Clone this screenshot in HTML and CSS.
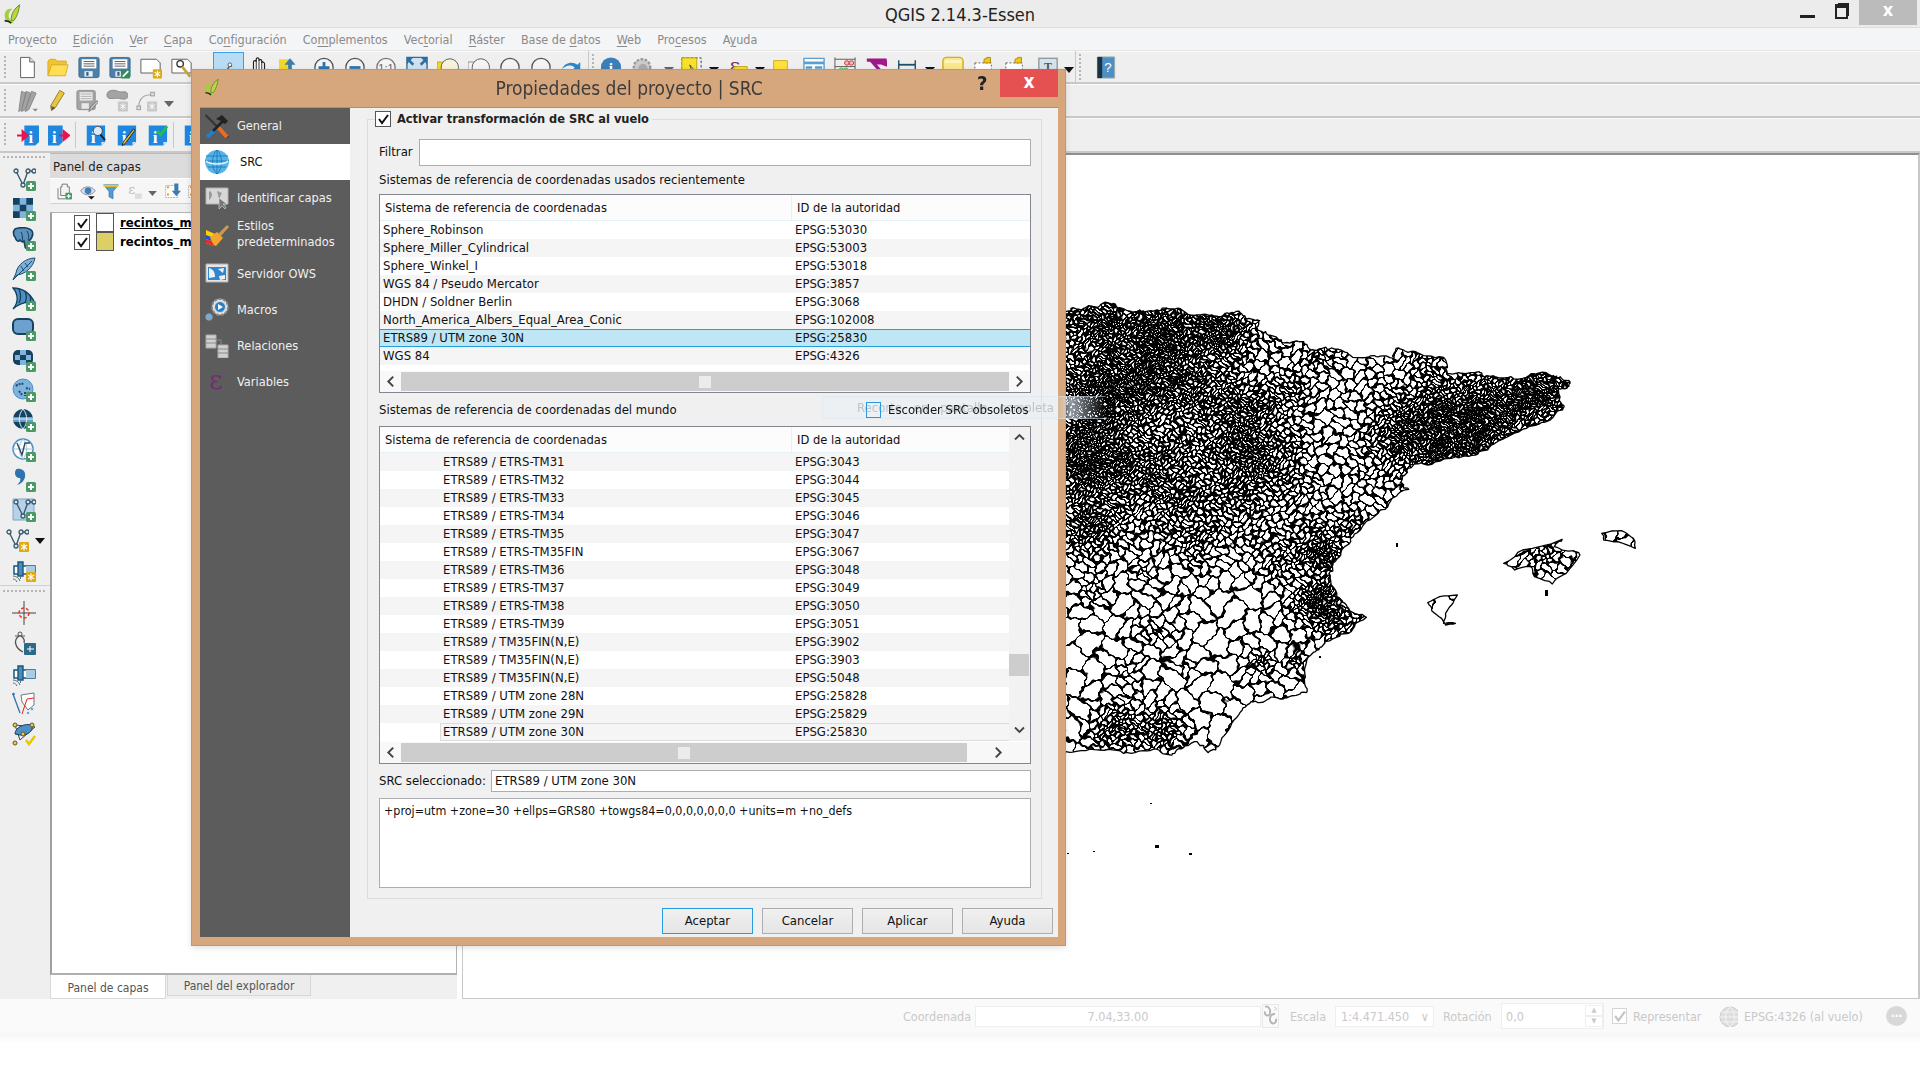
FILE: index.html
```html
<!DOCTYPE html>
<html lang="es">
<head>
<meta charset="utf-8">
<title>QGIS 2.14.3-Essen</title>
<link rel="stylesheet" href="styles.css">
</head>
<body>
<svg class="defs" xmlns="http://www.w3.org/2000/svg">
  <defs>
    <g id="b-plus"><rect x="14" y="14" width="10" height="10" rx="1.5" fill="#4a9a63"/><path d="M19 16v6M16 19h6" stroke="#fff" stroke-width="2"/></g>
    <g id="b-snow"><rect x="14" y="14" width="10" height="10" rx="1" fill="#e0a90f"/><path d="M19 15.5v7M16 17l6 4M22 17l-6 4" stroke="#fff" stroke-width="1.2"/></g>
    <g id="i-vee"><path d="M4 4l7 14 5-14h6" fill="none" stroke="#3a5a70" stroke-width="1.4"/><g fill="#dfe8ee" stroke="#3a5a70" stroke-width="1.3"><circle cx="4" cy="4" r="2"/><circle cx="11" cy="18" r="2"/><circle cx="16" cy="4" r="2"/><circle cx="22" cy="4" r="2"/></g></g>
    <g id="i-conn"><path d="M2 8h21v8H2z" fill="#fff" stroke="#14587f" stroke-width="1.5"/><path d="M14 8h9v8h-9z" fill="#a9cbe4"/><path d="M6 4h5v14H6z" fill="#4e8cbb" stroke="#14587f" stroke-width="1.4"/><path d="M8.500 18v3M1 18c3 0 6 2 7 5M1 21c2 0 3 1 4 3" fill="none" stroke="#5a7080"/></g>
    <g id="i-globe"><circle cx="12" cy="12" r="10" fill="#6fa8d6" stroke="#2f6f9f"/><path d="M2 12h20M12 2c-6 6-6 14 0 20M12 2c6 6 6 14 0 20M4 7h16M4 17h16" stroke="#d9ecfa" fill="none"/></g>

    <symbol id="ch-l" viewBox="0 0 10 12"><path d="M7.500 1.500L3 6l4.500 4.500" fill="none" stroke="#444" stroke-width="1.800"/></symbol>
    <symbol id="ch-r" viewBox="0 0 10 12"><path d="M2.500 1.500L7 6l-4.500 4.500" fill="none" stroke="#444" stroke-width="1.800"/></symbol>
    <symbol id="ch-u" viewBox="0 0 12 10"><path d="M1.500 7.500L6 3l4.500 4.500" fill="none" stroke="#444" stroke-width="1.800"/></symbol>
    <symbol id="ch-d" viewBox="0 0 12 10"><path d="M1.500 2.500L6 7l4.500-4.500" fill="none" stroke="#444" stroke-width="1.800"/></symbol>
    <symbol id="chain" viewBox="0 0 16 24"><path d="M2 2c4-2 7 4 5 8-2 3-6 1-5-3M13 10c-4-1-7 4-5 8s7 2 6-3" fill="none" stroke="#b4b4b4" stroke-width="2"/><path d="M12 2l3 2-3 2" fill="none" stroke="#ccc"/></symbol>

    <symbol id="new" viewBox="0 0 24 24"><path d="M5 1h10l5 5v17H5z" fill="#fff" stroke="#555"/><path d="M15 1v5h5" fill="#ddd" stroke="#555"/></symbol>
    <symbol id="open" viewBox="0 0 24 24"><path d="M1 20V5l2-2h6l2 2h10v4H6z" fill="#f2c32c" stroke="#d9a92a"/><path d="M1 21l4-12h18l-3 12z" fill="#ffdd55" stroke="#d9a92a"/></symbol>
    <symbol id="save" viewBox="0 0 24 24"><rect x="1" y="1" width="22" height="22" rx="2" fill="#4d7fa8" stroke="#3a6a90"/><path d="M4 3h16v10H4z" fill="#fff"/><path d="M6 5.500h12M6 8h12M6 10.500h12" stroke="#555"/><path d="M7 16h9v6H7z" fill="#e8eef3"/><path d="M9 17h2.500v4H9z" fill="#3a5f80"/></symbol>
    <symbol id="saveas" viewBox="0 0 24 24"><use href="#save" width="24" height="24"/><rect x="13" y="14" width="10" height="10" rx="1.500" fill="#378a5b"/><path d="M15 22l6-6" stroke="#fff" stroke-width="2"/></symbol>
    <symbol id="tmpl" viewBox="0 0 24 24"><path d="M1 3h17l4 4v11H1z" fill="#fff" stroke="#555"/><use href="#b-snow"/></symbol>
    <symbol id="comp" viewBox="0 0 24 24"><path d="M1 3h17l4 4v11H1z" fill="#fff" stroke="#555"/><circle cx="10" cy="8" r="3.500" fill="none" stroke="#333" stroke-width="1.500"/><path d="M12 11l9 11" stroke="#c9a23a" stroke-width="3"/></symbol>
    <symbol id="sel" viewBox="0 0 24 24"><path d="M5 24l9-14M13 8l3 3" stroke="#555" stroke-width="1.500" fill="none"/><circle cx="14" cy="9" r="2" fill="#fff" stroke="#555"/><path d="M2 22l4 2" stroke="#888"/></symbol>
    <symbol id="pan" viewBox="0 0 24 24"><path d="M6 24c-2-4-4-6-4-8s3-1 4 1V6c0-2 3-2 3 0V3c0-2 3-2 3 0v2c0-2 3-2 3 0v2c0-2 3-1 3 1v8l-1 8z" fill="#fff" stroke="#222" stroke-width="1.300"/><path d="M9 6v9M12 5v9M15 6v9" stroke="#222"/></symbol>
    <symbol id="pansel" viewBox="0 0 24 24"><path d="M0 3h12v11H0z" fill="#f3d728"/><path d="M12 2l6 7h-4v5h-4V9H6zM1 24l5-8 5 8zM14 24l5-8 5 8z" fill="#3d7cad"/></symbol>
    <symbol id="zin" viewBox="0 0 24 24"><circle cx="12" cy="12" r="10" fill="#f4f4f4" stroke="#555" stroke-width="1.400"/><path d="M6 12h12M12 6v12" stroke="#2f73ad" stroke-width="3"/></symbol>
    <symbol id="zout" viewBox="0 0 24 24"><circle cx="12" cy="12" r="10" fill="#f4f4f4" stroke="#555" stroke-width="1.400"/><path d="M6 12h12" stroke="#2f73ad" stroke-width="3"/></symbol>
    <symbol id="zone" viewBox="0 0 24 24"><circle cx="12" cy="12" r="10" fill="#f4f4f4" stroke="#777" stroke-width="1.400"/><text x="12" y="17" font-size="12" text-anchor="middle" fill="#666" font-family="Liberation Sans">1:1</text></symbol>
    <symbol id="zfull" viewBox="0 0 24 24"><path d="M1 1h22v18H1z" fill="#cfe0ee" stroke="#2f6f9f" stroke-width="1.500"/><path d="M1 1h7l-3 3 4 4-2 2-4-4-2 3zM23 1h-7l3 3-4 4 2 2 4-4 2 3z" fill="#2f6f9f"/></symbol>
    <symbol id="zlay" viewBox="0 0 24 24"><path d="M0 6h11v18H0z" fill="#f3d728" stroke="#c9a412"/><circle cx="14" cy="12" r="9.500" fill="#f6f2de" stroke="#555"/></symbol>
    <symbol id="zsel" viewBox="0 0 24 24"><path d="M0 6h11v18H0z" fill="#f4f4f4" stroke="#888"/><circle cx="14" cy="12" r="9.500" fill="#f4f4f4" stroke="#555"/></symbol>
    <symbol id="zlast" viewBox="0 0 24 24"><circle cx="12" cy="12" r="10" fill="#f4f4f4" stroke="#555" stroke-width="1.400"/></symbol>
    <symbol id="zref" viewBox="0 0 24 24"><path d="M1 14c3-8 12-9 17-5l3-3v9h-9l3-3c-4-3-9-3-14 2zM23 12" fill="#2f86c6"/><path d="M3 18c6 4 13 3 17-2" stroke="#2f86c6" stroke-width="3" fill="none"/></symbol>
    <symbol id="info" viewBox="0 0 24 24"><circle cx="12" cy="12" r="11" fill="#3a7fb8"/><text x="12" y="18" font-size="17" font-weight="700" text-anchor="middle" fill="#fff" font-family="Liberation Serif">i</text></symbol>
    <symbol id="action" viewBox="0 0 24 24"><circle cx="12" cy="12" r="9" fill="#ccc" stroke="#999" stroke-width="2.500" stroke-dasharray="3 1.500"/><circle cx="13" cy="13" r="5" fill="#aaa"/></symbol>
    <symbol id="drop" viewBox="0 0 12 7"><path d="M0 0h12L6 7z" fill="#111"/></symbol>
    <symbol id="dropg" viewBox="0 0 12 7"><path d="M0 0h12L6 7z" fill="#666"/></symbol>
    <symbol id="selbox" viewBox="0 0 24 24"><path d="M1 1h22v22H1z" fill="none" stroke="#333" stroke-dasharray="3 2"/><path d="M1 1h17v20H1z" fill="#f6e12c" stroke="#b69b10"/><path d="M10 9l6 7-3 0 1 4z" fill="#fff" stroke="#333"/></symbol>
    <symbol id="expr" viewBox="0 0 24 24"><text x="9" y="18" font-size="24" text-anchor="middle" fill="#70306f" font-family="DejaVu Serif">&#949;</text><path d="M8 11h15v13H8z" fill="#f6e12c" stroke="#c09a10"/></symbol>
    <symbol id="ysq" viewBox="0 0 24 24"><path d="M1 1h22v23H1z" fill="#ffe13b" stroke="#d8a91a" stroke-width="1.500"/></symbol>
    <symbol id="table" viewBox="0 0 24 24"><path d="M1 2h22v21H1z" fill="#fff" stroke="#5a9fd0" stroke-width="1.500"/><path d="M1 7h22" stroke="#5a9fd0" stroke-width="3"/><path d="M3 12h7M13 12h8M3 16h7M13 16h8" stroke="#5a9fd0" stroke-width="2.500"/></symbol>
    <symbol id="abacus" viewBox="0 0 24 24"><path d="M1 1v22M23 1v22M1 3h22M1 11h22M1 20h22" stroke="#555" fill="none"/><g fill="#f2b6b6" stroke="#c33"><circle cx="14" cy="7" r="2.500"/><circle cx="19" cy="7" r="2.500"/></g><g fill="#c8e8c8" stroke="#4a4"><circle cx="8" cy="15" r="2.500"/><circle cx="13" cy="15" r="2.500"/></g></symbol>
    <symbol id="sigma" viewBox="0 0 24 24"><path d="M2 4h20l1 5-5-2H9l7 8" fill="none" stroke="#a0178a" stroke-width="3.500"/></symbol>
    <symbol id="measure" viewBox="0 0 24 24"><path d="M3 9h18" stroke="#1c4f68" stroke-width="2"/><path d="M3 4v10M21 4v10" stroke="#1c4f68" stroke-width="1.500"/><path d="M1 20h22" stroke="#555" stroke-width="2"/></symbol>
    <symbol id="note" viewBox="0 0 24 24"><rect x="1" y="1" width="22" height="22" rx="4" fill="#fbe88d" stroke="#d8a91a" stroke-width="1.500"/><path d="M3 4h18v3H3z" fill="#fff4c0"/></symbol>
    <symbol id="anno" viewBox="0 0 24 24"><path d="M2 7h18v15H2z" fill="#fff" stroke="#555" stroke-dasharray="2 2"/><path d="M12 7V3l3-1v-1h4v6h-7z" fill="#f3c81c" stroke="#a8860f"/></symbol>
    <symbol id="textann" viewBox="0 0 24 24"><rect x="2" y="2" width="20" height="20" fill="#d7e3ea" stroke="#8a9aa6" stroke-width="1.500"/><text x="12" y="16" font-size="13" font-weight="700" text-anchor="middle" fill="#555" font-family="Liberation Serif">T</text></symbol>
    <symbol id="help" viewBox="0 0 20 24"><path d="M1 1h18v22H1z" fill="#4f8fc4" stroke="#9aa"/><path d="M1 1h5v22H1z" fill="#1b3243"/><text x="12" y="17" font-size="14" text-anchor="middle" fill="#fff" font-family="Liberation Sans">?</text></symbol>

    <symbol id="pens" viewBox="0 0 24 24"><path d="M6 2l5 2-5 18-3 2zM11 2l5 2-6 18-4 2zM17 2l5 2-8 18-4 2z" fill="#a3a3a3" stroke="#888"/><path d="M18 21h6l-3 3z" fill="#888"/></symbol>
    <symbol id="pencil" viewBox="0 0 24 24"><path d="M15 1l5 3-10 16-4 3-1-5z" fill="#ecc63a" stroke="#8a7a30"/><path d="M6 18l4 2-4 3z" fill="#555"/></symbol>
    <symbol id="saveg" viewBox="0 0 24 24"><rect x="1" y="1" width="20" height="21" rx="2" fill="#a3a3a3" stroke="#8f8f8f"/><path d="M4 3h14v9H4z" fill="#eee"/><path d="M5 5h12M5 7.500h12M5 10h12" stroke="#aaa"/><path d="M6 15h8v6H6z" fill="#e8e8e8"/><path d="M14 24l2-5 7-7 1 2-7 8z" fill="#c3c3c3" stroke="#777"/></symbol>
    <symbol id="polyg" viewBox="0 0 24 24"><path d="M1 6c0-6 9-6 12-4 4 2 10-2 11 4 1 5-5 5-9 4-4-2-14 3-14-4z" fill="#a3a3a3" stroke="#8a8a8a"/><rect x="13" y="13" width="11" height="11" rx="1" fill="#c8c8c8"/><path d="M18.500 15v7M15.500 16.500l6 4M21.500 16.500l-6 4" stroke="#fff"/></symbol>
    <symbol id="nodeg" viewBox="0 0 24 24"><path d="M3 20c0-8 3-13 10-14h5" fill="none" stroke="#aaa" stroke-width="1.300"/><g fill="#ddd" stroke="#999"><rect x="1" y="18" width="4" height="4"/><rect x="16" y="3" width="4" height="4"/></g><rect x="12" y="13" width="11" height="11" rx="1" fill="#c8c8c8"/><path d="M17.500 15v7M14.500 16.500l6 4M20.500 16.500l-6 4" stroke="#fff"/></symbol>
    <symbol id="infobase" viewBox="0 0 24 24"><path d="M3 1h20v18l-4 4H3z" fill="#1f87e0"/><path d="M19 23v-4h4z" fill="#cfe6f8"/><text x="10" y="20" font-size="19" font-weight="700" text-anchor="middle" fill="#fff" font-family="Liberation Serif">i</text></symbol>
    <symbol id="inout" viewBox="0 0 24 24"><path d="M8 1h16v18l-4 4H8z" fill="#1f87e0"/><text x="15" y="20" font-size="18" font-weight="700" text-anchor="middle" fill="#fff" font-family="Liberation Serif">i</text><path d="M0 12h9M6 7l6 5-6 5z" stroke="#e8134f" fill="#e8134f" stroke-width="2"/></symbol>
    <symbol id="outin" viewBox="0 0 24 24"><path d="M0 1h16v18l-4 4H0z" fill="#1f87e0"/><text x="7" y="20" font-size="18" font-weight="700" text-anchor="middle" fill="#fff" font-family="Liberation Serif">i</text><path d="M12 12h7M17 7l6 5-6 5z" stroke="#e8134f" fill="#e8134f" stroke-width="2"/></symbol>
    <symbol id="infomag" viewBox="0 0 24 24"><use href="#infobase" width="24" height="24"/><circle cx="15" cy="7" r="5" fill="#d9eaf7" stroke="#444"/><path d="M18 11l5 6" stroke="#222" stroke-width="2"/></symbol>
    <symbol id="infopen" viewBox="0 0 24 24"><use href="#infobase" width="24" height="24"/><path d="M22 6L11 21l-3 2 1-4L20 5z" fill="#e4b83c" stroke="#222"/></symbol>
    <symbol id="infochk" viewBox="0 0 24 24"><use href="#infobase" width="24" height="24"/><path d="M12 7l4 4 7-9" fill="none" stroke="#1fbf4f" stroke-width="3"/></symbol>

    <symbol id="l-vec" viewBox="0 0 24 24"><use href="#i-vee"/><use href="#b-plus"/></symbol>
    <symbol id="l-ras" viewBox="0 0 24 24"><path d="M1 1h20v20H1z" fill="#14425f"/><path d="M7.700 1h6.600v6.700H7.700zM1 7.700h6.700v6.600H1zM14.300 7.700H21v6.600h-6.700zM7.700 14.300h6.600V21H7.700z" fill="#7fb3dc"/><use href="#b-plus"/></symbol>
    <symbol id="l-pg" viewBox="0 0 24 24"><path d="M3 2c5-2 14-2 17 2 2 4-1 8-3 10l-1 7c-2 1-3 0-3-2l-1-5c-2 2-3 0-4-1-2 3-4 0-5-3C1 8 1 4 3 2z" fill="#5b92bd" stroke="#153f5e" stroke-width="1.600"/><path d="M9 5c2 3 1 7 2 9M15 4c2 3 2 6 1 9" stroke="#153f5e" fill="none"/><use href="#b-plus"/></symbol>
    <symbol id="l-feather" viewBox="0 0 24 24"><path d="M23 1C14 1 5 8 4 16l-3 7 4-5c8-1 16-7 18-17z" fill="#7fb0d8" stroke="#1d4e72"/><path d="M1 23L20 4M9 9l3 5M13 6l3 4" stroke="#1d4e72" fill="none"/><use href="#b-plus"/></symbol>
    <symbol id="l-sail" viewBox="0 0 24 24"><path d="M1 1c10 0 17 5 22 15-7-2-15 0-22 6 6-7 5-15 0-21z" fill="#4f8fc4" stroke="#153f5e" stroke-width="1.300"/><path d="M7 2c2 5 2 10 0 14M13 4c2 5 2 8 0 12M18 8c1 3 1 5 0 8" stroke="#153f5e" fill="none" stroke-width="1.300"/><use href="#b-plus"/></symbol>
    <symbol id="l-mss" viewBox="0 0 24 24"><rect x="1" y="2" width="20" height="15" rx="5" fill="#6ba0cf" stroke="#14425f" stroke-width="2"/><use href="#b-plus"/></symbol>
    <symbol id="l-ora" viewBox="0 0 24 24"><rect x="1" y="2" width="20" height="15" rx="5" fill="#14425f"/><path d="M8 2h6v5H8zM3 7h5v5H3zM14 7h5v5h-5zM8 12h6v5H8z" fill="#7fb3dc"/><use href="#b-plus"/></symbol>
    <symbol id="l-wms" viewBox="0 0 24 24"><circle cx="11" cy="11" r="10" fill="#7fb3dc" stroke="#4f8fc4"/><path d="M4 8c3-3 5-1 8-3M7 13l3 4M14 10l4 1M13 14v4" stroke="#1d4e72" stroke-width="2" fill="none" stroke-dasharray="2 1"/><use href="#b-plus"/></symbol>
    <symbol id="l-wcs" viewBox="0 0 24 24"><circle cx="11" cy="11" r="10" fill="#14425f"/><path d="M1 9h20v5H1z" fill="#6ba0cf"/><path d="M1 11h20M11 1c-5 6-5 14 0 20M11 1c5 6 5 14 0 20" stroke="#d9ecfa" fill="none"/><use href="#b-plus"/></symbol>
    <symbol id="l-wfs" viewBox="0 0 24 24"><circle cx="11" cy="11" r="10" fill="#fff" stroke="#4f8fc4" stroke-width="1.500"/><path d="M1 11h20M11 1c-5 6-5 14 0 20M11 1c5 6 5 14 0 20" stroke="#9cc4e4" fill="none"/><path d="M5 5l5 12 3-12h5" fill="none" stroke="#2c4a5e" stroke-width="1.400"/><use href="#b-plus"/></symbol>
    <symbol id="l-comma" viewBox="0 0 24 24"><path d="M5 1c6-1 9 3 8 8-1 4-4 7-8 8 3-3 4-5 3-7-3 0-5-2-5-5 0-2 1-4 2-4z" fill="#2f73ad"/><use href="#b-plus"/></symbol>
    <symbol id="l-virt" viewBox="0 0 24 24"><path d="M1 1h21v21H1z" fill="#b7d2e8" stroke="#7da4c4"/><use href="#i-vee"/><use href="#b-plus"/></symbol>
    <symbol id="l-newv" viewBox="0 0 24 24"><use href="#i-vee"/><use href="#b-snow"/></symbol>
    <symbol id="l-newc" viewBox="0 0 24 24"><use href="#i-conn"/><use href="#b-snow"/></symbol>
    <symbol id="l-cross" viewBox="0 0 24 24"><path d="M12 0v24M0 12h24" stroke="#444"/><circle cx="12" cy="12" r="5" fill="none" stroke="#e32" stroke-width="1.500" stroke-dasharray="3 2"/></symbol>
    <symbol id="l-comp" viewBox="0 0 24 24"><circle cx="8" cy="3" r="2" fill="none" stroke="#555"/><path d="M7 5C1 9 3 17 11 21M9 5c3 2 4 4 3 7" fill="none" stroke="#555" stroke-width="1.300"/><path d="M3 5h10" stroke="#555"/><rect x="12" y="12" width="12" height="12" rx="1" fill="#2c6a8a"/><path d="M15 18h7M18 15v6" stroke="#fff"/></symbol>
    <symbol id="l-conn" viewBox="0 0 24 24"><use href="#i-conn"/></symbol>
    <symbol id="l-node" viewBox="0 0 24 24"><path d="M1 2l7 19" stroke="#2f73ad" stroke-width="1.300"/><path d="M9 3l13-2v12l-6 5-6-8z" fill="#fff" stroke="#777"/><path d="M10 22l5-15 7-1M10 22" stroke="#e22" fill="none"/><circle cx="1.500" cy="2" r="1.300" fill="#2f73ad"/><circle cx="16" cy="21" r="1.300" fill="#6aa8dc"/><circle cx="20" cy="17" r="1.300" fill="#6aa8dc"/></symbol>
    <symbol id="l-chk" viewBox="0 0 24 24"><path d="M3 3l5 15 15-13z" fill="none" stroke="#444"/><path d="M3 12c0-7 10-11 17-9 2 6-5 11-12 10z" fill="#4f8fc4" stroke="#14425f"/><g fill="#f5d020" stroke="#555"><circle cx="3" cy="3" r="2"/><circle cx="20" cy="3" r="2"/><circle cx="3" cy="21" r="2"/><circle cx="11" cy="12" r="2"/></g><path d="M14 18l3 4 6-8" fill="none" stroke="#e6c800" stroke-width="2.500"/></symbol>

    <symbol id="p-add" viewBox="0 0 24 24"><path d="M9 1h8v4h3v13H7V5h2z" fill="#f3f3f3" stroke="#445"/><path d="M3 7v16h11" fill="none" stroke="#445"/><use href="#b-plus"/></symbol>
    <symbol id="p-eye" viewBox="0 0 24 24"><path d="M1 11c5-8 16-8 22 0-6 8-17 8-22 0z" fill="#dde" stroke="#667"/><circle cx="12" cy="11" r="5" fill="#3a7fb8"/><path d="M12 19h10l-5 5z" fill="#111"/></symbol>
    <symbol id="p-filter" viewBox="0 0 24 24"><path d="M1 2h22l-8 10v11l-6-3v-8z" fill="#5a9bcf" stroke="#2f6f9f"/><path d="M1 2h22v3H1z" fill="#f0c820"/></symbol>
    <symbol id="p-expr" viewBox="0 0 24 24"><text x="7" y="16" font-size="20" text-anchor="middle" fill="#bbb" font-family="DejaVu Serif">&#949;</text><path d="M12 15h10v8H12z" fill="#ddd"/></symbol>
    <symbol id="p-exp" viewBox="0 0 24 24"><path d="M1 3h18v18H1z" fill="#fff" stroke="#999" stroke-dasharray="3 1"/><path d="M14 0h6v11h4l-7 8-7-8h4z" fill="#3d7cad"/><path d="M3 4h3v3H3zM3 15h3v3H3z" fill="#f39a1c"/></symbol>

    <symbol id="s-gen" viewBox="0 0 24 24"><path d="M1 0l23 23-2 1L0 2z" fill="#333"/><path d="M12 14l-10 9" stroke="#1f7fc8" stroke-width="4"/><path d="M22 23l-9-10" stroke="#ef6a1f" stroke-width="4"/><path d="M11 5l6-4 6 6-3 3-2-1-9 9-2-2 9-9z" fill="#222"/></symbol>
    <symbol id="s-src" viewBox="0 0 24 24"><path d="M12 0c7 0 12 6 12 11a12 13 0 0 1-24 0C0 6 5 0 12 0z" fill="#56b4ea"/><path d="M0 11h24M1 6h22M3 17h18M12 0v24M12 0C6 6 6 18 12 24M12 0c6 6 6 18 0 24" stroke="#1872ad" fill="none" stroke-width=".8"/><path d="M1 11c4 4 18 4 22 0" stroke="#e3f2fb" fill="none" stroke-width="1.500"/></symbol>
    <symbol id="s-id" viewBox="0 0 24 24"><path d="M1 2h22v16H1z" fill="#d7d7d7" stroke="#b0b0b0"/><path d="M4 5c4 1 4 6 0 9M12 5l5 2-3 6z" fill="#9a9a9a"/><path d="M14 12v11l3-3 3 3 1-2-3-3h4z" fill="#777" stroke="#ddd" stroke-width=".6"/></symbol>
    <symbol id="s-est" viewBox="0 0 24 24"><path d="M1 6l9 4-1 12-8-3z" fill="#ffd000"/><path d="M1 11l8 3v4l-8-3z" fill="#2050d8"/><path d="M1 15l8 3v4l-8-3z" fill="#e62a2a"/><path d="M22 1l2 2-9 10-3-2z" fill="#c99a4a"/><path d="M5 13l7-5 6 6-7 8c-2 0-5-5-6-9z" fill="#f0a62d"/></symbol>
    <symbol id="s-ows" viewBox="0 0 24 24"><path d="M1 2h22v18H1z" fill="#e6e6e6" stroke="#b0b0b0"/><path d="M3 5h18v13H3z" fill="#2c87d0"/><path d="M4 6c4 1 6 4 6 9l-6 1zM13 7l6-1-1 5zM14 14l6-1v4l-5 1z" fill="#f0f0f0"/></symbol>
    <symbol id="s-mac" viewBox="0 0 24 24"><circle cx="15" cy="9" r="8" fill="#e4e4e4" stroke="#888" stroke-width="2" stroke-dasharray="3 1.500"/><circle cx="15" cy="9" r="5.500" fill="#2b7fc4" stroke="#ddd"/><path d="M13 6l5 3-5 3z" fill="#fff"/><circle cx="4" cy="19" r="3.500" fill="#7fa8cc" stroke="#888" stroke-dasharray="1.500 1"/></symbol>
    <symbol id="s-rel" viewBox="0 0 24 24"><path d="M1 1h10v13H1zM13 11h10v13H13z" fill="#d0d0d0" stroke="#aaa"/><path d="M1 5h10M1 9h10M13 15h10M13 19h10M11 6h5v5" stroke="#8a8a8a" fill="none"/></symbol>

    <symbol id="logo" viewBox="0 0 24 24"><path d="M13 23c-7 0-11-4-11-9 0-6 4-9 9-8-3 3-5 6-4 10 1 3 4 5 6 7z" fill="#a4cf3c"/><path d="M10 20C9 12 14 5 20 1c-1 7-3 14-7 19z" fill="#b8d840" stroke="#5a7a1a" stroke-width="1"/><path d="M2 20l5 1 3 2" stroke="#222" stroke-width="2" fill="none"/></symbol>
    <symbol id="chk" viewBox="0 0 12 12"><path d="M2 6l3 4 6-8" fill="none" stroke="#111" stroke-width="2"/></symbol>
    <symbol id="chkg" viewBox="0 0 12 12"><path d="M2 6l3 4 6-8" fill="none" stroke="#c4c4c4" stroke-width="2"/></symbol>
  </defs>
</svg>

<div class="win">
  <header class="titlebar">
    <svg class="applogo"><use href="#logo"/></svg>
    <span class="apptitle">QGIS 2.14.3-Essen</span>
    <div class="winctl">
      <span class="w-min"></span>
      <span class="w-max"></span>
      <span class="w-close">x</span>
    </div>
  </header>

  <nav class="menubar">
    <span>Pro<u>y</u>ecto</span><span><u>E</u>dición</span><span><u>V</u>er</span><span><u>C</u>apa</span><span>Co<u>n</u>figuración</span><span>Co<u>m</u>plementos</span><span>Vec<u>t</u>orial</span><span><u>R</u>áster</span><span>Base de <u>d</u>atos</span><span><u>W</u>eb</span><span>Pro<u>c</u>esos</span><span>A<u>y</u>uda</span>
  </nav>

  <div class="tb tb1">
    <i class="grip"></i>
    <div class="t"><svg><use href="#new"/></svg></div>
    <div class="t"><svg><use href="#open"/></svg></div>
    <div class="t"><svg><use href="#save"/></svg></div>
    <div class="t"><svg><use href="#saveas"/></svg></div>
    <div class="t"><svg><use href="#tmpl"/></svg></div>
    <div class="t"><svg><use href="#comp"/></svg></div>
    <i class="sp15"></i>
    <div class="t t-on"><svg><use href="#sel"/></svg></div>
    <div class="t"><svg><use href="#pan"/></svg></div>
    <div class="t"><svg><use href="#pansel"/></svg></div>
    <i class="sp3"></i>
    <div class="t"><svg><use href="#zin"/></svg></div>
    <div class="t"><svg><use href="#zout"/></svg></div>
    <div class="t"><svg><use href="#zone"/></svg></div>
    <div class="t"><svg><use href="#zfull"/></svg></div>
    <div class="t"><svg><use href="#zlay"/></svg></div>
    <div class="t"><svg><use href="#zsel"/></svg></div>
    <div class="t"><svg><use href="#zlast"/></svg></div>
    <div class="t"><svg><use href="#zlast"/></svg></div>
    <div class="t"><svg><use href="#zref"/></svg></div>
    <i class="sep"></i><i class="grip grip-r"></i>
    <div class="t"><svg><use href="#info"/></svg></div>
    <div class="t"><svg><use href="#action"/></svg></div>
    <div class="d d23"><svg><use href="#dropg"/></svg></div>
    <div class="t t21"><svg><use href="#selbox"/></svg></div>
    <div class="d d25"><svg><use href="#drop"/></svg></div>
    <div class="t t21"><svg><use href="#expr"/></svg></div>
    <div class="d d25"><svg><use href="#drop"/></svg></div>
    <div class="t t15"><svg><use href="#ysq"/></svg></div>
    <i class="sp11"></i>
    <div class="t"><svg><use href="#table"/></svg></div>
    <div class="t"><svg><use href="#abacus"/></svg></div>
    <div class="t"><svg><use href="#sigma"/></svg></div>
    <div class="t"><svg><use href="#measure"/></svg></div>
    <div class="d d15"><svg><use href="#drop"/></svg></div>
    <div class="t"><svg><use href="#note"/></svg></div>
    <div class="t"><svg><use href="#anno"/></svg></div>
    <div class="t"><svg><use href="#anno"/></svg></div>
    <i class="sp2"></i>
    <div class="t"><svg><use href="#textann"/></svg></div>
    <div class="d d11"><svg><use href="#drop"/></svg></div>
    <i class="sep"></i><i class="grip grip-r"></i>
    <div class="t t-help"><svg><use href="#help"/></svg></div>
  </div>

  <div class="tb tb2">
    <i class="grip"></i>
    <div class="t t-e1"><svg><use href="#pens"/></svg></div>
    <div class="t t-e"><svg><use href="#pencil"/></svg></div>
    <div class="t t-e"><svg><use href="#saveg"/></svg></div>
    <div class="t t-e"><svg><use href="#polyg"/></svg></div>
    <div class="t t-e"><svg><use href="#nodeg"/></svg></div>
    <div class="d d15"><svg><use href="#dropg"/></svg></div>
  </div>

  <div class="tb tb3">
    <i class="grip"></i>
    <div class="t t-i1"><svg><use href="#inout"/></svg></div>
    <div class="t t-i"><svg><use href="#outin"/></svg></div>
    <i class="sep sep-i"></i>
    <div class="t t-i"><svg><use href="#infomag"/></svg></div>
    <div class="t t-i"><svg><use href="#infopen"/></svg></div>
    <div class="t t-i"><svg><use href="#infochk"/></svg></div>
    <i class="sep sep-i"></i>
    <div class="t t-i"><svg><use href="#infobase"/></svg></div>
  </div>

  <div class="work">
    <aside class="ltb">
      <i class="grip-h"></i>
      <div class="lt"><svg><use href="#l-vec"/></svg></div>
      <div class="lt"><svg><use href="#l-ras"/></svg></div>
      <div class="lt"><svg><use href="#l-pg"/></svg></div>
      <div class="lt"><svg><use href="#l-feather"/></svg></div>
      <div class="lt"><svg><use href="#l-sail"/></svg></div>
      <div class="lt"><svg><use href="#l-mss"/></svg></div>
      <div class="lt"><svg><use href="#l-ora"/></svg></div>
      <div class="lt"><svg><use href="#l-wms"/></svg></div>
      <div class="lt"><svg><use href="#l-wcs"/></svg></div>
      <div class="lt"><svg><use href="#l-wfs"/></svg></div>
      <div class="lt"><svg><use href="#l-comma"/></svg></div>
      <div class="lt"><svg><use href="#l-virt"/></svg></div>
      <div class="lt lt-drop"><svg><use href="#l-newv"/></svg><svg class="ltd"><use href="#drop"/></svg></div>
      <div class="lt"><svg><use href="#l-newc"/></svg></div>
      <div class="ltb-div"></div>
      <i class="grip-h"></i>
      <div class="lt"><svg><use href="#l-cross"/></svg></div>
      <div class="lt"><svg><use href="#l-comp"/></svg></div>
      <div class="lt"><svg><use href="#l-conn"/></svg></div>
      <div class="lt"><svg><use href="#l-node"/></svg></div>
      <div class="lt"><svg><use href="#l-chk"/></svg></div>
    </aside>

    <section class="dock">
      <div class="dock-title">Panel de capas</div>
      <div class="dock-tools">
        <svg><use href="#p-add"/></svg>
        <svg><use href="#p-eye"/></svg>
        <svg><use href="#p-filter"/></svg>
        <svg><use href="#p-expr"/></svg>
        <svg class="pd"><use href="#dropg"/></svg>
        <svg><use href="#p-exp"/></svg>
        <svg><use href="#p-exp"/></svg>
      </div>
      <div class="tree">
        <div class="layer">
          <span class="cb"><svg><use href="#chk"/></svg></span>
          <span class="swatch"></span>
          <span class="lname lname-cur">recintos_municipales</span>
        </div>
        <div class="layer">
          <span class="cb"><svg><use href="#chk"/></svg></span>
          <span class="swatch swatch-y"></span>
          <span class="lname">recintos_municipales</span>
        </div>
      </div>
      <div class="tabs">
        <span class="tab tab-on">Panel de capas</span>
        <span class="tab">Panel del explorador</span>
      </div>
    </section>

    <main class="mapview"><canvas id="map" width="1456" height="844"></canvas></main>
  </div>

  <footer class="status">
    <span class="s-l s-coord">Coordenada</span>
    <span class="s-in s-cv">7.04,33.00</span>
    <span class="s-btn"><svg><use href="#chain"/></svg></span>
    <span class="s-l s-esc">Escala</span>
    <span class="s-in s-sc">1:4.471.450<b class="s-arr">&#8744;</b></span>
    <span class="s-l s-rot">Rotación</span>
    <span class="s-in s-sp">0,0<b class="s-spin"><i>&#9650;</i><i>&#9660;</i></b></span>
    <span class="s-cb"><svg><use href="#chkg"/></svg></span>
    <span class="s-l s-rep">Representar</span>
    <svg class="s-gl"><use href="#i-globe"/></svg>
    <span class="s-l s-epsg">EPSG:4326 (al vuelo)</span>
    <span class="s-bub">&#8230;</span>
  </footer>
  <div class="bottomfade"></div>
</div>

<section class="dlg">
  <div class="dlg-title">
    <svg class="dlg-logo"><use href="#logo"/></svg>
    <span>Propiedades del proyecto | SRC</span>
    <span class="dlg-q">?</span>
    <span class="dlg-x">x</span>
  </div>
  <div class="dlg-body">
    <nav class="side">
      <div class="si"><svg><use href="#s-gen"/></svg><span>General</span></div>
      <div class="si si-on"><svg><use href="#s-src"/></svg><span>SRC</span></div>
      <div class="si"><svg><use href="#s-id"/></svg><span>Identificar capas</span></div>
      <div class="si si-2"><svg><use href="#s-est"/></svg><span>Estilos<br>predeterminados</span></div>
      <div class="si"><svg><use href="#s-ows"/></svg><span>Servidor OWS</span></div>
      <div class="si"><svg><use href="#s-mac"/></svg><span>Macros</span></div>
      <div class="si"><svg><use href="#s-rel"/></svg><span>Relaciones</span></div>
      <div class="si"><svg class="si-eps" viewBox="0 0 24 24"><text x="11" y="19" font-size="26" text-anchor="middle" fill="#70306f" font-family="DejaVu Serif">&#949;</text></svg><span>Variables</span></div>
    </nav>
    <div class="pane">
      <div class="group">
        <div class="legend"><span class="cb cb-l"><svg><use href="#chk"/></svg></span><b>Activar transformación de SRC al vuelo</b></div>
        <div class="frow"><label>Filtrar</label><span class="input grow"></span></div>
        <div class="lab">Sistemas de referencia de coordenadas usados recientemente</div>
        <div class="tbl tbl1">
          <div class="thead"><span>Sistema de referencia de coordenadas</span><span>ID de la autoridad</span></div>
          <div class="row"><span>Sphere_Robinson</span><span>EPSG:53030</span></div>
          <div class="row"><span>Sphere_Miller_Cylindrical</span><span>EPSG:53003</span></div>
          <div class="row"><span>Sphere_Winkel_I</span><span>EPSG:53018</span></div>
          <div class="row"><span>WGS 84 / Pseudo Mercator</span><span>EPSG:3857</span></div>
          <div class="row"><span>DHDN / Soldner Berlin</span><span>EPSG:3068</span></div>
          <div class="row"><span>North_America_Albers_Equal_Area_Conic</span><span>EPSG:102008</span></div>
          <div class="row row-sel"><span>ETRS89 / UTM zone 30N</span><span>EPSG:25830</span></div>
          <div class="row"><span>WGS 84</span><span>EPSG:4326</span></div>
          <div class="hbar hbar1"><svg class="ar"><use href="#ch-l"/></svg><div class="htrack"><i class="hthumb ht1"></i></div><svg class="ar"><use href="#ch-r"/></svg></div>
        </div>
        <div class="frow2">
          <span class="lab2">Sistemas de referencia de coordenadas del mundo</span>
          <span class="cb cb-o"></span><span class="oblabel">Esconder SRC obsoletos</span>
        </div>
        <div class="tbl tbl2">
          <div class="t2main">
            <div class="t2rows">
              <div class="thead"><span>Sistema de referencia de coordenadas</span><span>ID de la autoridad</span></div>
              <div class="row row2"><span>ETRS89 / ETRS-TM31</span><span>EPSG:3043</span></div>
              <div class="row row2"><span>ETRS89 / ETRS-TM32</span><span>EPSG:3044</span></div>
              <div class="row row2"><span>ETRS89 / ETRS-TM33</span><span>EPSG:3045</span></div>
              <div class="row row2"><span>ETRS89 / ETRS-TM34</span><span>EPSG:3046</span></div>
              <div class="row row2"><span>ETRS89 / ETRS-TM35</span><span>EPSG:3047</span></div>
              <div class="row row2"><span>ETRS89 / ETRS-TM35FIN</span><span>EPSG:3067</span></div>
              <div class="row row2"><span>ETRS89 / ETRS-TM36</span><span>EPSG:3048</span></div>
              <div class="row row2"><span>ETRS89 / ETRS-TM37</span><span>EPSG:3049</span></div>
              <div class="row row2"><span>ETRS89 / ETRS-TM38</span><span>EPSG:3050</span></div>
              <div class="row row2"><span>ETRS89 / ETRS-TM39</span><span>EPSG:3051</span></div>
              <div class="row row2"><span>ETRS89 / TM35FIN(N,E)</span><span>EPSG:3902</span></div>
              <div class="row row2"><span>ETRS89 / TM35FIN(N,E)</span><span>EPSG:3903</span></div>
              <div class="row row2"><span>ETRS89 / TM35FIN(N,E)</span><span>EPSG:5048</span></div>
              <div class="row row2"><span>ETRS89 / UTM zone 28N</span><span>EPSG:25828</span></div>
              <div class="row row2"><span>ETRS89 / UTM zone 29N</span><span>EPSG:25829</span></div>
              <div class="row row2 row-cur"><span>ETRS89 / UTM zone 30N</span><span>EPSG:25830</span></div>
            </div>
            <div class="vbar"><svg class="arv"><use href="#ch-u"/></svg><i class="vthumb"></i><svg class="arv arv-d"><use href="#ch-d"/></svg></div>
          </div>
          <div class="hbar hbar2"><svg class="ar"><use href="#ch-l"/></svg><div class="htrack"><i class="hthumb ht2"></i></div><svg class="ar ar-w"><use href="#ch-r"/></svg></div>
        </div>
        <div class="frow3"><label>SRC seleccionado:</label><span class="input grow inp-t">ETRS89 / UTM zone 30N</span></div>
        <div class="proj">+proj=utm +zone=30 +ellps=GRS80 +towgs84=0,0,0,0,0,0,0 +units=m +no_defs</div>
      </div>
      <div class="btns">
        <button class="btn btn-def">Aceptar</button>
        <button class="btn">Cancelar</button>
        <button class="btn">Aplicar</button>
        <button class="btn">Ayuda</button>
      </div>
    </div>
  </div>
</section>
<div class="ghost"><span>Recorte en pantalla completa</span></div>
<script src="map.js"></script>
</body>
</html>
```

FILE: styles.css
```css
* { box-sizing: border-box; }
html, body { margin: 0; height: 100%; overflow: hidden; background: #fff; }
body { font: 13px/1.2 "DejaVu Sans Condensed", "Liberation Sans", sans-serif; color: #111; position: relative; }
.defs { display: none; }
u { text-decoration-thickness: 1px; text-underline-offset: 2px; }
svg { display: block; }

.win { width: 1920px; height: 1080px; display: flex; flex-direction: column; background: #fff; }
.titlebar { height: 28px; background: #ececec; border-bottom: 1px solid #dcdcdc; display: flex; align-items: center; justify-content: center; position: relative; padding-top: 2px; }
.applogo { width: 20px; height: 22px; position: absolute; left: 3px; top: 3px; }
.apptitle { font-size: 18px; color: #222; }
.winctl { position: absolute; right: 3px; top: 0; height: 25px; display: flex; align-items: flex-start; }
.w-min { width: 15px; height: 3px; background: #222; margin: 15px 20px 0 0; }
.w-max { width: 13px; height: 15px; border: 2px solid #222; border-top-width: 4px; margin: 4px 11px 0 0; box-shadow: 2px -2px 0 -1px #222; }
.w-close { width: 58px; height: 25px; background: #bbb; color: #fff; font-size: 18px; font-weight: 700; text-align: center; line-height: 20px; }

.menubar { height: 23px; background: #f4f5f7; border-bottom: 1px solid #e4e4e4; display: flex; align-items: center; padding-left: 8px; gap: 16px; color: #8a8a8a; font-size: 12.500px; }

.tb { display: flex; align-items: center; background: #efefef; border-bottom: 2px solid #c8c8c8; border-top: 1px solid #fafafa; position: relative; padding-left: 11.500px; }
.tb1 { height: 33px; }
.tb2 { height: 34px; }
.tb3 { height: 35px; }
.grip { position: absolute; left: 4px; top: 4px; bottom: 4px; width: 2px; background: repeating-linear-gradient(#b5b5b5 0 2px, transparent 2px 4px); }
.grip-r { position: static; height: 26px; margin: 0 2px 0 3px; flex: none; }
.sep { width: 1px; height: 32px; background: #c8c8c8; flex: none; }
.sep-i { height: 26px; margin: 0 2px; }
.t { width: 31px; height: 24px; flex: none; display: flex; align-items: center; justify-content: center; }
.t svg { width: 22px; height: 23px; }
.t-on { background: #b9dcf5; outline: 1px solid #3d9ee8; outline-offset: -1px; height: 30px; }
.t21 { width: 21px; }
.t15 { width: 15px; }
.t15 svg { width: 15px; }
.t-help { margin-left: 8px; }
.t-e1 { margin-left: 2px; width: 26px; }
.t-e { margin-left: 4px; width: 26px; }
.t-i1 { margin-left: 3px; width: 27px; }
.t-i { margin-left: 4px; width: 27px; }
.sp15 { width: 15px; flex: none; }
.sp11 { width: 11px; flex: none; }
.sp3 { width: 3px; flex: none; }
.sp2 { width: 2px; flex: none; }
.d { flex: none; display: flex; align-items: center; justify-content: center; }
.d svg { width: 10px; height: 6px; margin-top: 6px; }
.d23 { width: 23px; }
.d25 { width: 25px; }
.d15 { width: 15px; }
.d11 { width: 11px; }
.t-e + .d15 { margin-left: 2px; }

.work { height: 846px; display: flex; }
.ltb { width: 50px; background: #efefef; display: flex; flex-direction: column; flex: none; padding-top: 3px; }
.grip-h { display: block; height: 2px; margin: 0 3px 9px; background: repeating-linear-gradient(90deg, #b5b5b5 0 2px, transparent 2px 4px); flex: none; }
.lt { height: 30.100px; padding-left: 12px; flex: none; position: relative; }
.lt svg { width: 24px; height: 24px; }
.lt-drop svg:first-child { margin-left: -7px; }
.lt svg.ltd { position: absolute; left: 35px; top: 10px; width: 10px; height: 6px; }
.ltb-div { height: 1px; background: #cfcfcf; margin: -3px 0 4px; flex: none; }

.dock { width: 407px; flex: none; display: flex; flex-direction: column; background: #efefef; }
.dock-title { height: 25px; background: #dcdcdc; padding: 5px 0 0 3px; font-size: 13px; color: #222; border-top: 1px solid #bbb; }
.dock-tools { height: 26px; background: #f6f6f6; border-top: 1px solid #fff; border-bottom: 1px solid #d0d0d0; display: flex; align-items: center; padding-left: 6px; gap: 7.500px; }
.dock-tools svg { width: 16px; height: 19px; flex: none; }
.dock-tools svg.pd { width: 9px; height: 5px; margin: 4px 0 0 -2px; }
.tree { flex: 1; margin-top: 8px; background: #fff; border: 1px solid #b4b4b4; border-left: 2px solid #a0a0a0; border-bottom: 2px solid #b0b0b0; padding: 0 0 0 22px; }
.layer { display: flex; align-items: center; height: 19px; }
.cb { width: 16px; height: 16px; border: 1px solid #555; background: #fff; display: inline-flex; align-items: center; justify-content: center; flex: none; }
.cb svg { width: 12px; height: 12px; }
.swatch { width: 18px; height: 19px; border: 1px solid #555; background: #fff; margin: 0 6px; flex: none; }
.swatch-y { background: #dbcf65; }
.lname { font-weight: 700; color: #000; white-space: nowrap; }
.lname-cur { text-decoration: underline; }
.tabs { height: 24px; display: flex; background: #f0f0f0; align-items: flex-start; }
.tab { height: 21px; border: 1px solid #d8d8d8; border-top: 0; padding: 4px 0 0; text-align: center; color: #555; font-size: 12px; width: 144px; background: #ececec; }
.tab-on { width: 116px; height: 24px; background: #fff; margin-right: 1px; padding-top: 6px; }

.mapview { width: 1458px; margin-left: 5px; flex: 1; background: #fff; border-top: 2px solid #8f8f8f; border-left: 1px solid #c8c8c8; border-right: 2px solid #c8c8c8; border-bottom: 1px solid #c8c8c8; overflow: hidden; }
#map { display: block; }

.status { height: 34px; flex: none; background: #fafafa; display: flex; align-items: center; padding-left: 903px; color: #c9c9c9; font-size: 12.500px; }
.s-l { flex: none; white-space: nowrap; }
.s-coord { width: 72px; }
.s-in { background: #fff; border: 1px solid #eee; height: 21px; display: flex; align-items: center; flex: none; position: relative; }
.s-cv { width: 286px; justify-content: center; }
.s-btn { width: 17px; height: 24px; margin-left: 1px; border: 1px solid #e8e8e8; flex: none; }
.s-btn svg { width: 15px; height: 22px; }
.s-esc { width: 45px; margin-left: 11px; }
.s-sc { width: 99px; padding-left: 5px; }
.s-arr { position: absolute; right: 4px; font-weight: 400; }
.s-rot { width: 58px; margin-left: 9px; }
.s-sp { width: 103px; height: 26px; padding-left: 4px; }
.s-spin { position: absolute; right: 0; top: 1px; width: 18px; display: flex; flex-direction: column; font-size: 7px; text-align: center; font-weight: 400; }
.s-spin i { font-style: normal; height: 11px; border: 1px solid #eee; }
.s-cb { width: 15px; height: 16px; margin-left: 8px; border: 1px solid #d5d5d5; background: #fff; flex: none; }
.s-cb svg { width: 13px; height: 14px; }
.s-rep { margin-left: 6px; width: 77px; }
.s-gl { width: 20px; height: 22px; margin-left: 8px; opacity: .3; filter: grayscale(1); flex: none; }
.s-epsg { margin-left: 6px; width: 121px; }
.s-bub { width: 21px; height: 20px; margin-left: 21px; border-radius: 50%; background: #d8d8d8; color: #fff; text-align: center; font-weight: 700; line-height: 14px; flex: none; }
.bottomfade { height: 10px; background: linear-gradient(#f6f6f6, #fff); }

.dlg { position: absolute; left: 191px; top: 69px; width: 875px; height: 877px; background: #d6a67c; border: 1px solid #c3966f; padding: 0 7px 8px 8px; display: flex; flex-direction: column; box-shadow: 0 2px 6px rgba(0, 0, 0, .12); }
.dlg-title { height: 37px; flex: none; display: flex; align-items: center; justify-content: center; font-size: 19px; color: #3c3c3c; position: relative; }
.dlg-logo { position: absolute; left: 4px; top: 6px; width: 17px; height: 22px; }
.dlg-q { position: absolute; left: 777px; top: 1px; font-size: 20px; font-weight: 700; color: #222; }
.dlg-x { position: absolute; right: 0; top: -1px; width: 58px; height: 28px; background: #e55151; color: #fff; font-size: 19px; font-weight: 700; text-align: center; line-height: 24px; }
.dlg-body { flex: 1; display: flex; min-height: 0; border-top: 1px solid #b88e6a; }
.side { width: 150px; flex: none; background: #5c5c5c; color: #f0f0f0; font-size: 12.700px; }
.si { height: 36px; display: flex; align-items: center; gap: 8px; padding-left: 5px; }
.si svg { width: 24px; height: 24px; flex: none; }
.si span { line-height: 16px; }
.si-2 { height: 40px; }
.si-2 span { margin-top: -4px; }
.si-on { background: #fff; color: #111; gap: 11px; }
.pane { flex: 1; background: #f0f0f0; padding: 11px 0 0 17px; display: flex; flex-direction: column; }
.group { width: 675px; height: 780px; border: 1px solid #dcdcdc; padding: 0 10px 0 11px; display: flex; flex-direction: column; }
.legend { display: flex; align-items: center; gap: 6px; margin: -9px 0 0 -4px; height: 16px; width: fit-content; background: #f0f0f0; padding-right: 3px; font-size: 12.700px; }
.legend b { color: #222; }
.frow { display: flex; align-items: center; height: 27px; margin-top: 12px; }
.frow label { width: 40px; flex: none; margin-top: -2px; }
.input { background: #fff; border: 1px solid #abadb3; display: flex; align-items: center; height: 100%; }
.grow { flex: 1; }
.lab { height: 18px; margin-top: 5px; line-height: 18px; }
.tbl { background: #fff; border: 1px solid #828790; margin-top: 5px; display: flex; flex-direction: column; }
.tbl1 { height: 199px; }
.tbl2 { height: 338px; margin-top: 6px; }
.thead { display: grid; grid-template-columns: 411px 1fr; height: 26px; flex: none; background: #fcfcfc; border-bottom: 1px solid #e6f0f7; font-size: 12.800px; }
.thead span { padding: 4px 0 0 5px; line-height: 18px; }
.thead span + span { border-left: 1px solid #e6f0f7; }
.row { display: grid; grid-template-columns: 411px 1fr; height: 18px; line-height: 18px; flex: none; }
.row span { padding-left: 3px; white-space: nowrap; }
.row span + span { padding-left: 4px; }
.row2 span:first-child { padding-left: 63px; }
.tbl1 .row:nth-of-type(odd) { background: #f5f5f5; }
.row2:nth-of-type(even) { background: #f5f5f5; }
.tbl1 .row.row-sel { background: #bee6f5; box-shadow: inset 0 1px 0 #26a0da, inset 0 -1px 0 #26a0da; }
.row-cur { background: linear-gradient(90deg, #fff 60px, #f5f5f5 60px) !important; position: relative; }
.row-cur::after { content: ""; position: absolute; left: 60px; right: 0; top: 0; bottom: 0; border: 1px solid #dcdcdc; border-right: 0; }
.hbar { display: flex; align-items: center; height: 20px; flex: none; background: #f8f8f8; }
.hbar1 { margin-top: 6px; height: 21px; }
.hbar2 { margin-top: 1px; height: 21px; }
.ar { width: 21px; height: 13px; flex: none; }
.ar-w { width: 63px; }
.htrack { flex: 1; height: 19px; background: #cdcdcd; position: relative; display: flex; align-items: center; }
.hthumb { position: absolute; height: 12px; width: 12px; background: #ececec; top: 4px; }
.ht1 { left: 298px; }
.ht2 { left: 277px; }
.t2main { display: flex; flex: 1; min-height: 0; }
.t2rows { flex: 1; }
.vbar { width: 21px; flex: none; background: #f2f2f2; position: relative; }
.arv { position: absolute; left: 0; width: 100%; height: 10px; top: 5px; }
.arv-d { top: auto; bottom: 6px; }
.vthumb { position: absolute; left: 0; width: 20px; height: 22px; top: 227px; background: #cdcdcd; }
.frow2 { display: flex; align-items: center; height: 18px; margin-top: 8px; margin-bottom: 1px; position: relative; }
.lab2 { width: 487px; flex: none; }
.cb-o { border: 1px solid #2a9ae0; width: 15px; height: 16px; background: transparent; margin-right: 7px; position: relative; z-index: 2; }
.cb-l { border-color: #555; }
.oblabel { white-space: nowrap; position: relative; z-index: 2; }
.frow3 { display: flex; align-items: center; height: 22px; margin-top: 6px; }
.frow3 label { width: 112px; flex: none; }
.inp-t { padding-left: 3px; }
.proj { height: 90px; margin-top: 6px; background: #fff; border: 1px solid #abadb3; padding: 3px 4px; line-height: 18px; font-size: 12.400px; }
.btns { display: flex; gap: 9px; margin: 9px 0 0 295px; }
.btn { width: 91px; height: 26px; background: linear-gradient(#f0f0f0, #e5e5e5); border: 1px solid #adadad; font: inherit; color: #111; padding: 0; }
.btn-def { border: 1px solid #2a9ae0; }

.ghost { position: absolute; left: 822px; top: 396px; width: 283px; height: 23px; background: linear-gradient(90deg, rgba(225, 238, 248, .25) 0, rgba(225, 238, 248, .25) 84%, rgba(225, 238, 248, .65) 88%, rgba(225, 238, 248, 0)); border: 1px solid rgba(215, 230, 240, .5); border-right: 0; padding-left: 34px; color: rgba(110, 110, 110, .35); line-height: 21px; white-space: nowrap; }
.ghost span { display: block; width: 197px; text-align-last: justify; }
```

FILE: map.js
```js
(function () {
  var cv = document.getElementById('map');
  var ctx = cv.getContext('2d');
  var W = cv.width, H = cv.height;
  var rect = cv.getBoundingClientRect();
  var OX = rect.left, OY = rect.top;

  var seed = 20160412;
  function rnd() {
    seed |= 0; seed = seed + 0x6D2B79F5 | 0;
    var t = Math.imul(seed ^ seed >>> 15, 1 | seed);
    t = t + Math.imul(t ^ t >>> 7, 61 | t) ^ t;
    return ((t ^ t >>> 14) >>> 0) / 4294967296;
  }
  function zx(x) { return 1060 + x / 2.529 - OX; }
  function zy(y) { return 280 + y / 3 - OY; }
  function conv(a) { return a.map(function (p) { return [zx(p[0]), zy(p[1])]; }); }

  var coast = conv([[-60, 95], [15, 95], [60, 85], [100, 78], [140, 72], [190, 95], [230, 92], [270, 85], [330, 105], [390, 108], [435, 97], [470, 115], [505, 122], [500, 150], [520, 155], [560, 180], [610, 185], [640, 210], [690, 205], [740, 232], [800, 230], [845, 235], [850, 205], [900, 215], [970, 232], [980, 280], [1060, 275], [1100, 290], [1170, 295], [1230, 278], [1265, 290], [1290, 310], [1260, 325], [1275, 380], [1240, 420], [1180, 445], [1100, 490], [1060, 515], [1000, 530], [930, 555], [880, 565], [860, 610], [882, 628], [840, 655], [810, 690], [760, 750], [720, 800], [690, 850], [680, 880], [700, 950], [730, 985], [775, 1012], [730, 1060], [670, 1085], [650, 1110], [620, 1160], [625, 1235], [580, 1250], [530, 1255], [480, 1270], [440, 1320], [400, 1400], [375, 1418], [340, 1385], [290, 1420], [250, 1410], [180, 1420], [100, 1410], [15, 1415], [-60, 1415]]);
  var mallorca = conv([[1122, 850], [1170, 810], [1270, 778], [1250, 800], [1300, 812], [1315, 825], [1280, 880], [1245, 912], [1200, 890], [1190, 860], [1150, 870]]);
  var menorca = conv([[1370, 760], [1420, 752], [1450, 775], [1455, 805], [1410, 785], [1375, 780]]);
  var ibiza = conv([[930, 968], [960, 950], [1005, 945], [990, 975], [975, 1000], [970, 1030], [1000, 1030], [975, 1035], [965, 1015], [940, 992]]);

  function rough(poly, levels, amp) {
    var p = poly;
    for (var l = 0; l < levels; l++) {
      var out = [];
      for (var i = 0; i < p.length; i++) {
        var a = p[i], b = p[(i + 1) % p.length];
        out.push(a);
        out.push([(a[0] + b[0]) / 2 + (rnd() - .5) * amp, (a[1] + b[1]) / 2 + (rnd() - .5) * amp]);
      }
      p = out;
      amp *= .6;
    }
    return p;
  }
  var polys = [rough(coast, 3, 6), rough(mallorca, 2, 3.5), rough(menorca, 2, 2.5), rough(ibiza, 2, 2)];

  function trace(c, p) {
    c.beginPath();
    p.forEach(function (q, i) { if (i) c.lineTo(q[0], q[1]); else c.moveTo(q[0], q[1]); });
    c.closePath();
  }

  var mc = document.createElement('canvas');
  mc.width = W; mc.height = H;
  var m = mc.getContext('2d');
  m.fillStyle = '#000';
  polys.forEach(function (p) { trace(m, p); m.fill(); });
  var x0 = 590, x1 = Math.min(W, 1250), y0 = 120, y1 = 660;
  var mask = m.getImageData(0, 0, W, H).data;

  var blobs = [
    [100, 130, 22, .06], [280, 140, 22, .07], [410, 150, 17, .08], [190, 260, 22, .04], [300, 300, 26, .05],
    [90, 350, 24, .07], [60, 540, 26, .07], [240, 570, 24, .05], [80, 730, 18, .05], [480, 510, 26, .06],
    [420, 390, 20, .02], [900, 450, 24, .06], [1000, 450, 26, .08], [1090, 410, 24, .08], [1210, 340, 16, .1],
    [670, 830, 10, .09], [655, 960, 13, .09], [700, 1010, 11, .04], [620, 780, 15, .025],
    [140, 1340, 13, .05], [250, 1345, 12, .06], [510, 1150, 5, .05], [600, 1140, 5, .06], [350, 720, 24, .02],
    [1220, 830, 11, .02], [80, 930, 10, .015], [170, 1180, 12, .012], [230, 1060, 10, .012]
  ];
  /* small random clusters give the uneven grain of real municipalities */
  for (var bi = 0; bi < 110; bi++) {
    var bx = rnd() * 1000, by = 90 + rnd() * 1300;
    blobs.push([bx, by, 4 + rnd() * 9, by > 900 ? rnd() * .008 : rnd() * .025]);
  }
  function dens(x, y) {
    var yy = (y - zy(0)) * 3;
    var t = Math.min(1, Math.max(0, (950 - yy) / 200));
    var r = .0009 + .0035 * t;
    for (var i = 0; i < blobs.length; i++) {
      var b = blobs[i], dx = x - zx(b[0]), dy = y - zy(b[1]);
      r += b[3] * Math.exp(-(dx * dx + dy * dy) / (2 * b[2] * b[2]));
    }
    return r;
  }

  var G = 14, GW = Math.ceil(W / G), grid = {};
  function key(i, j) { return j * GW + i; }
  function add(x, y) {
    var k = key(x / G | 0, y / G | 0);
    (grid[k] || (grid[k] = [])).push(x, y);
  }
  for (var n = 0; n < 70000; n++) {
    var sx = x0 - 10 + rnd() * (x1 - x0 + 20), sy = y0 - 10 + rnd() * (y1 - y0 + 20);
    var md = .6 / Math.sqrt(dens(sx, sy)), md2 = md * md, rr = Math.ceil(md / G), ok = true;
    var ci = sx / G | 0, cj = sy / G | 0;
    for (var j = cj - rr; j <= cj + rr && ok; j++) {
      for (var i = ci - rr; i <= ci + rr && ok; i++) {
        var c = grid[key(i, j)];
        if (!c) continue;
        for (var q = 0; q < c.length; q += 2) {
          var ddx = c[q] - sx, ddy = c[q + 1] - sy;
          if (ddx * ddx + ddy * ddy < md2) { ok = false; break; }
        }
      }
    }
    if (ok) add(sx, sy);
  }

  var img = ctx.createImageData(W, H), px = img.data;
  for (var y = y0; y < y1; y++) {
    for (var x = x0; x < x1; x++) {
      if (mask[(y * W + x) * 4 + 3] < 100) continue;
      var wx = x + 2.6 * Math.sin(y * .13 + x * .05 + 1) + 1.3 * Math.sin(y * .41 + x * .23) + .6 * Math.sin(y * .93 - x * .41);
      var wy = y + 2.6 * Math.sin(x * .12 - y * .04 + 2) + 1.3 * Math.sin(x * .37 - y * .19) + .6 * Math.sin(x * .87 + y * .47);
      var gi = wx / G | 0, gj = wy / G | 0, d1 = 1e12, d2 = 1e12;
      for (var r = 0; r < 10; r++) {
        for (var b = gj - r; b <= gj + r; b++) {
          for (var a = gi - r; a <= gi + r; a++) {
            if (Math.max(Math.abs(a - gi), Math.abs(b - gj)) !== r) continue;
            var cell = grid[key(a, b)];
            if (!cell) continue;
            for (var k = 0; k < cell.length; k += 2) {
              var ex = cell[k] - wx, ey = cell[k + 1] - wy, dd = ex * ex + ey * ey;
              if (dd < d1) { d2 = d1; d1 = dd; } else if (dd < d2) { d2 = dd; }
            }
          }
        }
        if (d2 < (r * G) * (r * G)) break;
      }
      var edge = Math.sqrt(d2) - Math.sqrt(d1);
      var al = Math.max(0, Math.min(1, 2.4 - edge));
      if (al > 0) {
        var o = (y * W + x) * 4;
        px[o + 3] = al * 255;
      }
    }
  }
  ctx.putImageData(img, 0, 0);

  ctx.strokeStyle = '#000';
  ctx.lineWidth = 1.3;
  ctx.lineJoin = 'round';
  polys.forEach(function (p) { trace(ctx, p); ctx.stroke(); });

  ctx.fillStyle = '#000';
  [[1396, 543, 2, 4], [1545, 590, 3, 6], [1319, 656, 2, 2], [1150, 803, 2, 1], [1093, 851, 2, 1], [1155, 845, 4, 3], [1189, 853, 3, 2], [1067, 853, 2, 1]].forEach(function (d) {
    ctx.fillRect(d[0] - OX, d[1] - OY, d[2], d[3]);
  });
})();
```
